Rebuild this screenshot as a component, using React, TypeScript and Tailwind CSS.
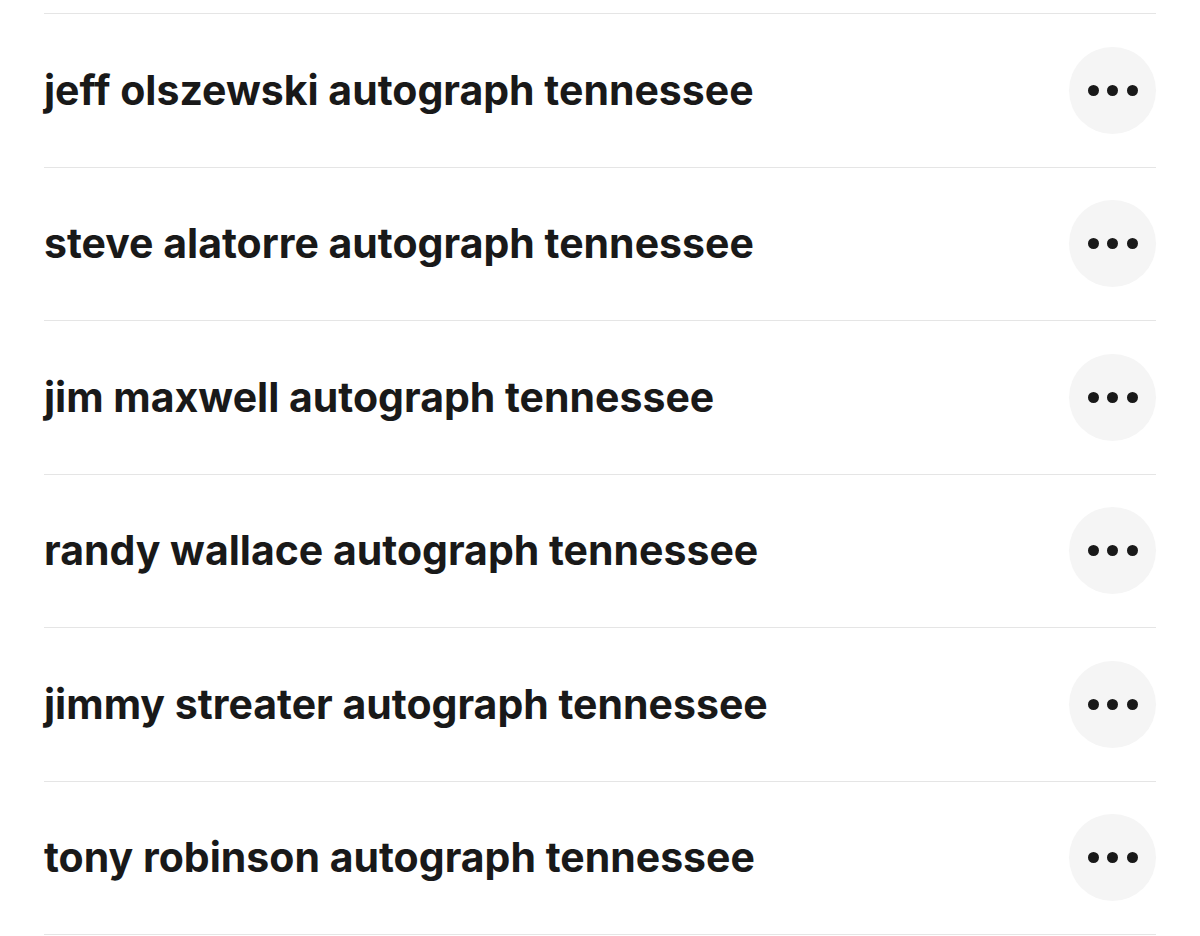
import { FiMoreHorizontal } from "react-icons/fi";

const searches = [
  "jeff olszewski autograph tennessee",
  "steve alatorre autograph tennessee",
  "jim maxwell autograph tennessee",
  "randy wallace autograph tennessee",
  "jimmy streater autograph tennessee",
  "tony robinson autograph tennessee",
];

const App = () => {
  return (
    <div className="min-h-[936px] bg-white px-[44px] pt-[13px] font-['Inter',sans-serif] text-[#191919]">
      <ul className="border-b border-[#e5e5e5]">
        {searches.map((s) => (
          <li
            key={s}
            className="flex h-[153.5px] items-center justify-between border-t border-[#e5e5e5]"
          >
            <span className="text-[41px] font-bold leading-none">{s}</span>
            <button
              type="button"
              aria-label="More options"
              className="flex h-[87px] w-[87px] items-center justify-center rounded-full bg-[#f5f5f5]"
            >
              <span className="flex gap-[8.5px]">
                <span className="h-[11px] w-[11px] rounded-full bg-[#191919]" />
                <span className="h-[11px] w-[11px] rounded-full bg-[#191919]" />
                <span className="h-[11px] w-[11px] rounded-full bg-[#191919]" />
              </span>
            </button>
          </li>
        ))}
      </ul>
    </div>
  );
};

export default App;
